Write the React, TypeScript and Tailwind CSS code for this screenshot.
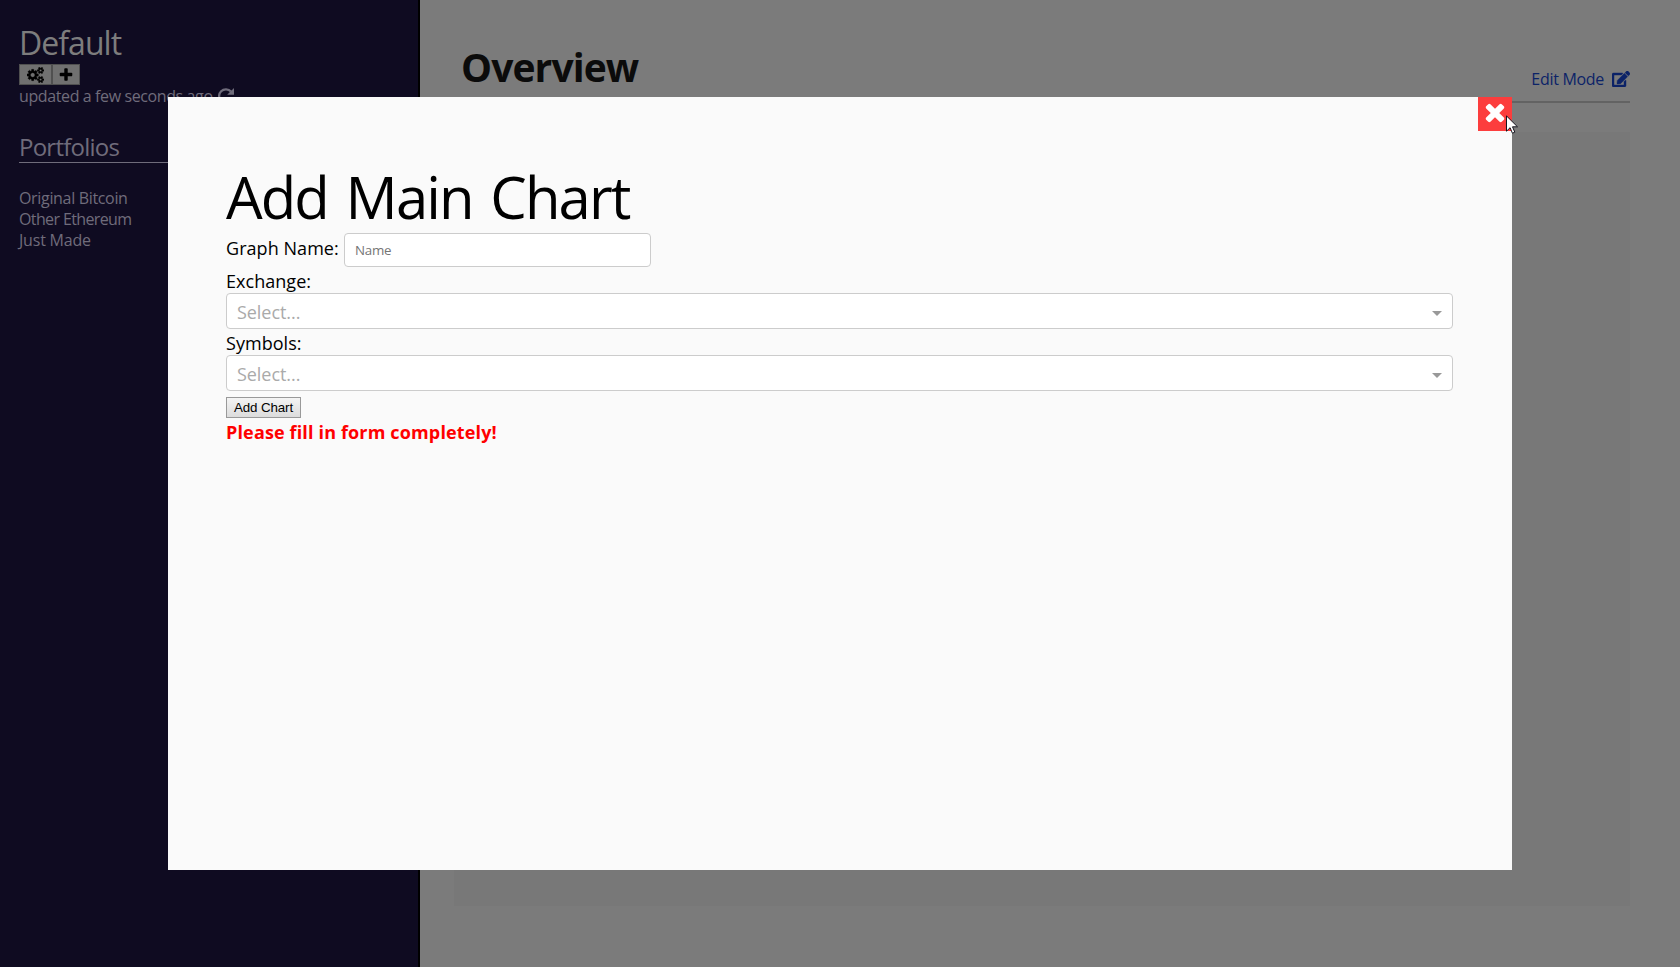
import type { ReactNode } from "react";
import { FaEdit } from "react-icons/fa";

function Glyph({ d, className, viewBox = "0 0 1792 1792" }: { d: string; className: string; viewBox?: string }) {
  return (
    <svg viewBox={viewBox} className={className} fill="currentColor" aria-hidden="true">
      <path d={d} />
    </svg>
  );
}

const PLUS =
  "M1600 736v192q0 40-28 68t-68 28h-416v416q0 40-28 68t-68 28h-192q-40 0-68-28t-28-68v-416h-416q-40 0-68-28t-28-68v-192q0-40 28-68t68-28h416v-416q0-40 28-68t68-28h192q40 0 68 28t28 68v416h416q40 0 68 28t28 68z";
const TIMES =
  "M1490 1322q0 40-28 68l-136 136q-28 28-68 28t-68-28l-294-294-294 294q-28 28-68 28t-68-28l-136-136q-28-28-28-68t28-68l294-294-294-294q-28-28-28-68t28-68l136-136q28-28 68-28t68 28l294 294 294-294q28-28 68-28t68 28l136 136q28 28 28 68t-28 68l-294 294 294 294q28 28 28 68z";
const SMALL_COG =
  "v140q0 16-149 31-12 27-30 52 51 113 51 138 0 4-4 7-122 71-124 71-8 0-46-47t-52-68q-20 2-30 2t-30-2q-14 21-52 68t-46 47q-2 0-124-71-4-3-4-7 0-25 51-138-18-25-30-52-149-15-149-31v-140q0-16 149-31 13-29 30-52-51-113-51-138 0-4 4-7 4-2 35-20t59-34 30-16q8 0 46 46.5t52 67.5q20-2 30-2t30 2q51-71 92-112l6-2q4 0 124 70 4 3 4 7 0 25-51 138 17 23 30 52 149 15 149 31z";
const COGS =
  "M896 896q0-106-75-181t-181-75-181 75-75 181 75 181 181 75 181-75 75-181zm768 512q0-52-38-90t-90-38-90 38-38 90q0 53 37.5 90.5t90.5 37.5 90.5-37.5 37.5-90.5zm0-1024q0-52-38-90t-90-38-90 38-38 90q0 53 37.5 90.5t90.5 37.5 90.5-37.5 37.5-90.5zm-384 421v185q0 10-7 19.5t-16 10.5l-155 24q-11 35-32 76 34 48 90 115 7 11 7 20 0 12-7 19-23 30-82.5 89.5t-78.5 59.5q-11 0-21-7l-115-90q-37 19-77 31-11 108-23 155-7 24-30 24h-186q-11 0-20-7.5t-10-17.5l-23-153q-34-10-75-31l-118 89q-7 7-20 7-11 0-21-8-144-133-144-160 0-9 7-19 10-14 41-53t47-61q-23-44-35-82l-152-24q-10-1-17-9.5t-7-19.5v-185q0-10 7-19.5t16-10.5l155-24q11-35 32-76-34-48-90-115-7-11-7-20 0-12 7-20 22-30 82-89t79-59q11 0 21 7l115 90q34-18 77-32 11-108 23-154 7-24 30-24h186q11 0 20 7.5t10 17.5l23 153q34 10 75 31l118-89q8-7 20-7 11 0 21 8 144 133 144 160 0 8-7 19-12 16-42 54t-45 60q23 48 34 82l152 23q10 2 17 10.5t7 19.5z" +
  "M1920 1338" + SMALL_COG + "M1920 314" + SMALL_COG;

function RefreshIcon() {
  return (
    <svg viewBox="0 0 16 16" className="mt-[3px] ml-[5px] size-4 shrink-0" fill="none" aria-hidden="true">
      <path d="M13 3.6A6.8 6.8 0 1 0 13.2 12.4" stroke="currentColor" strokeWidth="2.3" />
      <path d="M16 0v6.8H9.2z" fill="currentColor" />
    </svg>
  );
}

function SelectBox() {
  return (
    <div className="flex h-9 w-[1227px] items-center justify-between rounded-[4px] border border-[#ccc] bg-white px-[10px]">
      <span className="pt-px text-[18px] leading-[34px] tracking-[-0.06px] text-[#aaa]">Select...</span>
      <span className="mt-[4px] border-x-[5px] border-t-[5px] border-x-transparent border-t-[#999]" />
    </div>
  );
}

function Label({ children }: { children: ReactNode }) {
  return <div className="mt-[2px] h-6 text-[18px] leading-6 tracking-[0.04px]">{children}</div>;
}

export default function App() {
  return (
    <div className="relative flex h-[967px] w-[1680px] overflow-hidden bg-[#7b7b7b] font-['Open_Sans',sans-serif] text-black">
      <aside className="w-[420px] shrink-0 border-r-2 border-black bg-[#0f0b21] px-[19px] pt-[19px] text-[16px] leading-[21px] text-[#6f6c7b]">
        <h1 className="h-[45px] pt-[2px] text-[32px] leading-[43px] tracking-[-0.95px] text-[#7d7d7d]">Default</h1>
        <div className="flex h-[21px] text-black">
          <button className="flex w-[33px] items-center justify-center border border-[#505050] bg-[#707070]">
            <Glyph d={COGS} viewBox="0 0 1920 1792" className="h-4 w-[17px] stroke-black stroke-[40px]" />
          </button>
          <button className="flex w-[28px] items-center justify-center border border-[#505050] bg-[#707070]">
            <Glyph d={PLUS} className="size-4" />
          </button>
        </div>
        <div className="flex h-[21px] whitespace-nowrap">
          <span className="pt-px tracking-[-0.39px]">updated a few seconds ago</span>
          <RefreshIcon />
        </div>
        <h2 className="mt-[25px] h-8 border-b border-[#6f6c7b] text-[24px] leading-[31px] tracking-[-0.76px]">Portfolios</h2>
        <ul className="mt-[25px]">
          <li className="tracking-[-0.33px]">Original Bitcoin</li>
          <li className="tracking-[-0.62px]">Other Ethereum</li>
          <li className="tracking-[-0.2px]">Just Made</li>
        </ul>
      </aside>
      <main className="flex-1 pt-10 pr-[50px] pl-[34px]">
        <header className="flex h-[63px] justify-between border-b-2 border-[#636363]">
          <h2 className="pl-[7px] text-[39px] leading-[53px] font-bold tracking-[-0.9px] text-[#0b0b0b]">Overview</h2>
          <div className="flex pt-[29px] text-[16px] leading-[21px] text-[#0c2368]">
            <span className="tracking-[-0.3px]">Edit Mode</span>
            <FaEdit className="mt-[2px] ml-[8px] h-4 w-[18px] stroke-current stroke-[14px]" />
          </div>
        </header>
        <section className="mt-[29px] h-[774px] bg-[#787878]" />
      </main>

      <div className="absolute top-[97px] left-[168px] h-[773px] w-[1344px] bg-[#fafafa] px-[58px] pt-[61px]">
        <h1 className="h-[75px] text-[58px] leading-[77px] tracking-[-1.9px] [word-spacing:4.5px]">Add Main Chart</h1>
        <div className="flex h-[34px] text-[18px]">
          <label className="w-[118px] pt-[3px] leading-6 tracking-[0.05px]">Graph Name:</label>
          <input
            placeholder="Name"
            className="h-[34px] w-[307px] rounded-[4px] border border-[#ccc] bg-white px-[10px] text-[13.33px] tracking-[-0.26px] placeholder:text-[#757575]"
          />
        </div>
        <Label>Exchange:</Label>
        <SelectBox />
        <Label>Symbols:</Label>
        <SelectBox />
        <button className="mt-[6px] flex h-[21px] w-[75px] items-center justify-center border border-[#999] bg-linear-to-b from-[#f4f4f4] to-[#dcdcdc] font-['Liberation_Sans',sans-serif] text-[13.33px] tracking-[-0.1px]">
          Add Chart
        </button>
        <p className="mt-[2px] text-[18px] leading-6 font-bold tracking-[0.15px] text-[#f00]">Please fill in form completely!</p>
        <button aria-label="Close" className="absolute top-0 right-0 flex size-[34px] items-center justify-center bg-[#fc3d3d] text-white">
          <Glyph d={TIMES} className="mt-[-4px] size-7" />
        </button>
      </div>
      <svg viewBox="0 0 12 19" className="absolute top-[115px] left-[1506px] h-[19px] w-3" aria-hidden="true">
        <path d="M.5.9v15.3l3.6-3.5 2.3 5.5 2.4-1-2.3-5.4h5z" fill="#fff" stroke="#15151f" />
      </svg>
    </div>
  );
}
